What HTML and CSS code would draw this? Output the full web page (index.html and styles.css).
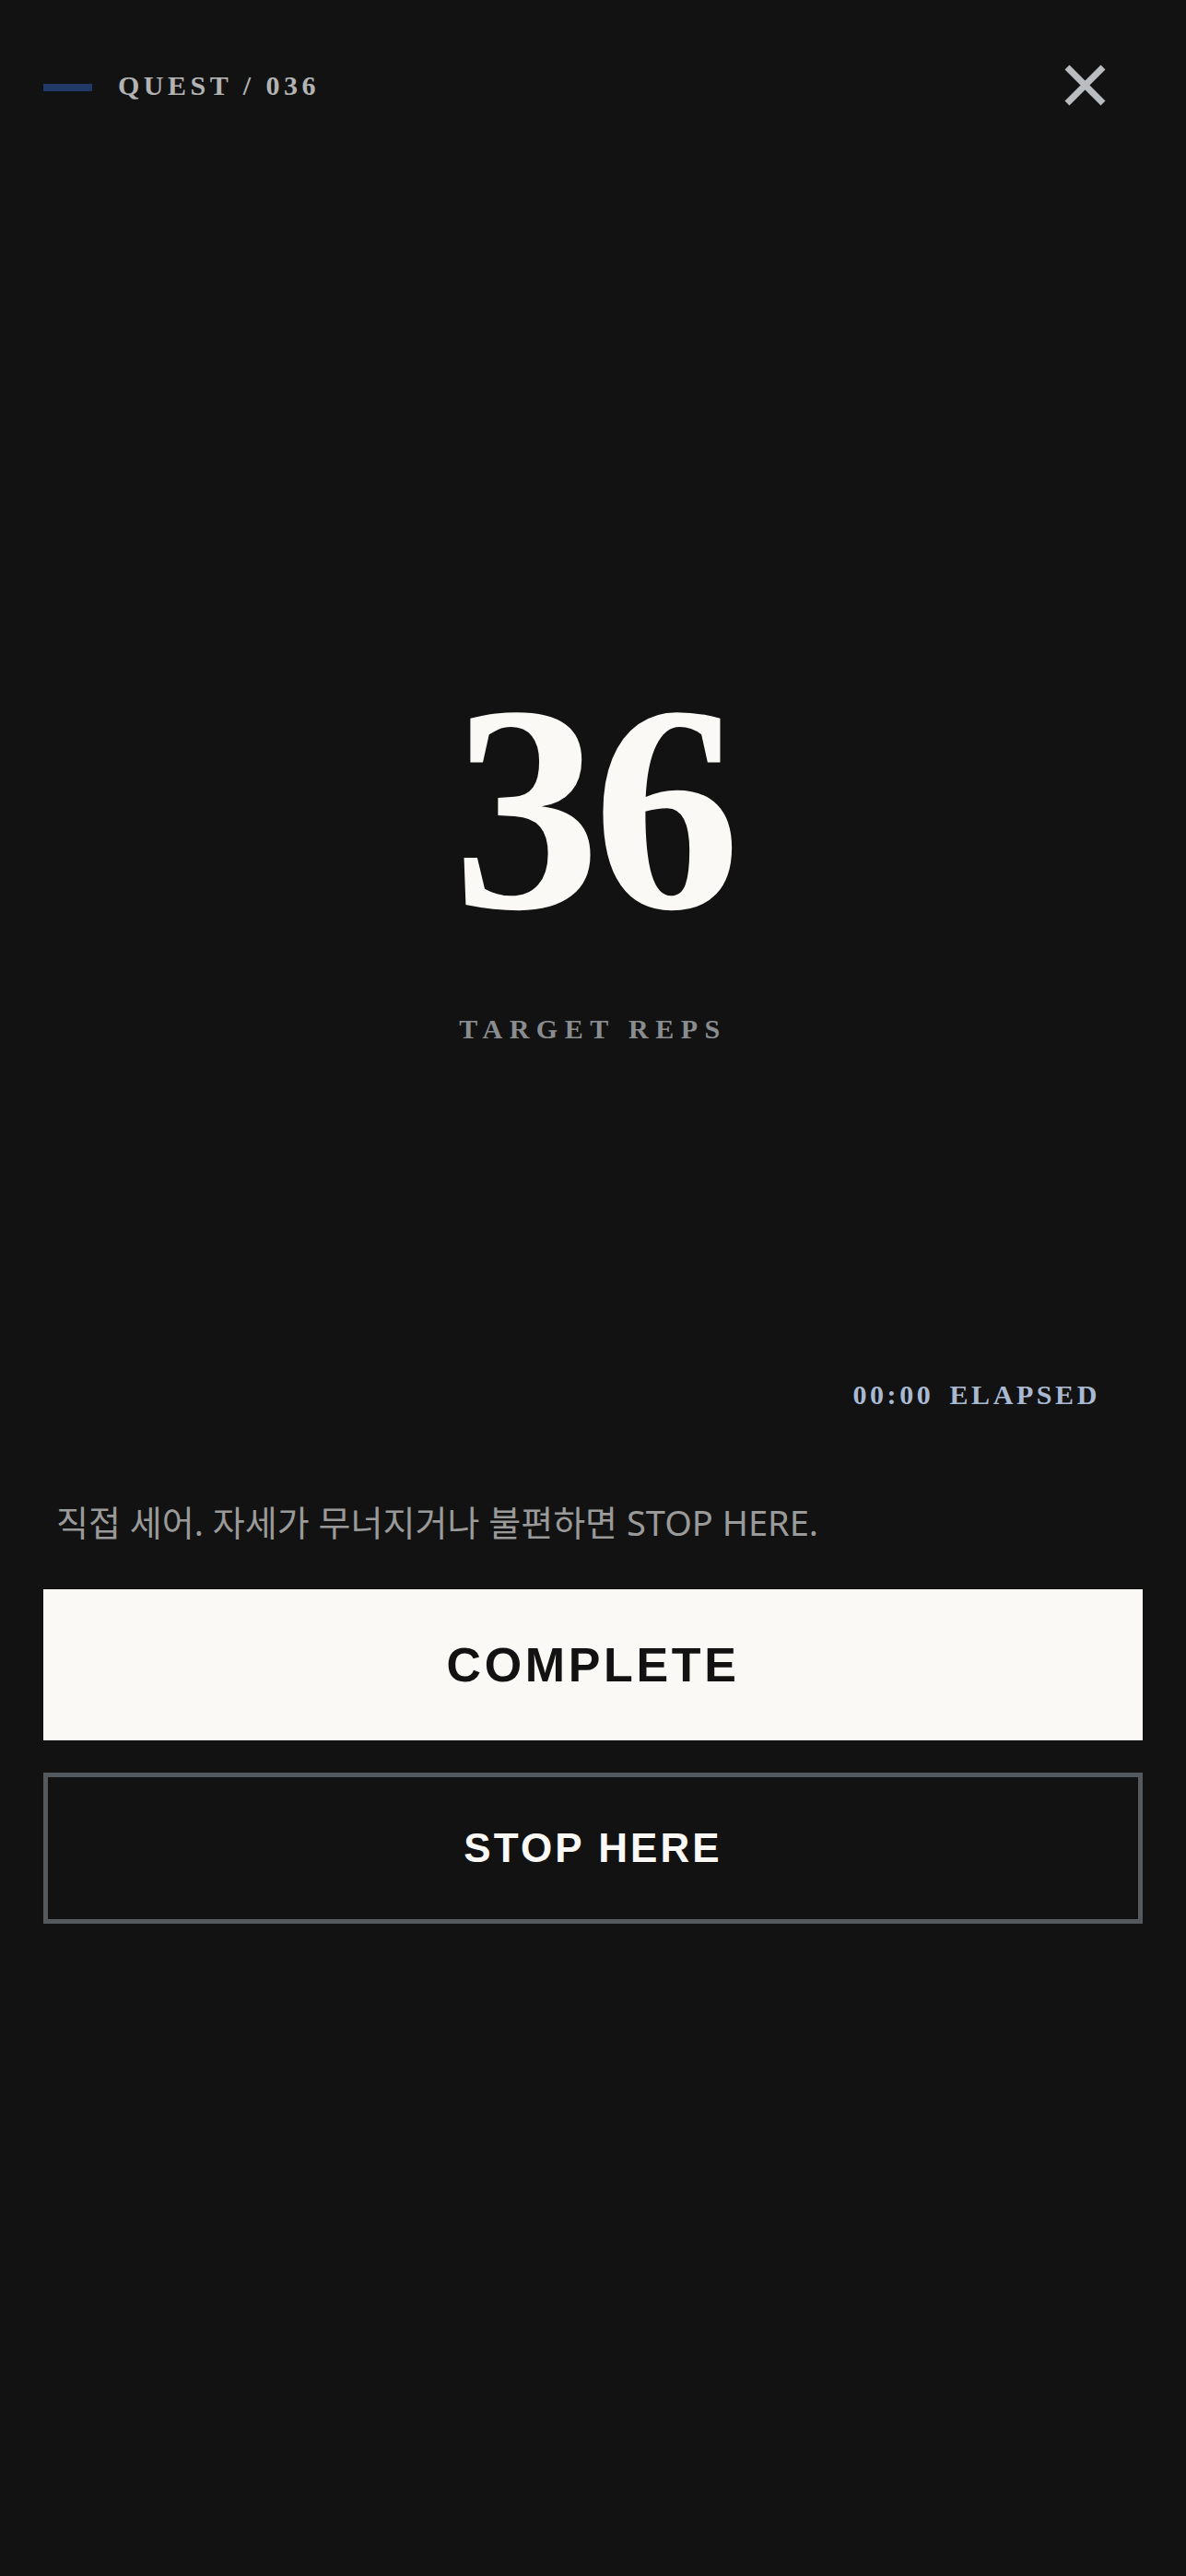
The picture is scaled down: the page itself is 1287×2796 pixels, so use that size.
FILE: index.html
```html
<!DOCTYPE html>
<html lang="ko">
<head>
<meta charset="utf-8">
<title>Quest 036</title>
<link rel="stylesheet" href="styles.css">
</head>
<body>
<main class="screen">
  <header class="topbar">
    <div class="quest">
      <span class="quest-mark"></span>
      <span class="quest-label">QUEST / 036</span>
    </div>
    <button class="close" aria-label="Close">
      <svg viewBox="0 0 45 45" width="45" height="45"><path d="M3 3 L42 42 M42 3 L3 42" stroke="#b9bdbf" stroke-width="7" fill="none"/></svg>
    </button>
  </header>
  <section class="target">
    <div class="target-count">36</div>
    <div class="target-label">TARGET REPS</div>
  </section>
  <div class="elapsed"><span class="elapsed-time">00:00</span><span class="elapsed-label">ELAPSED</span></div>
  <p class="note">직접 세어. 자세가 무너지거나 불편하면 STOP HERE.</p>
  <div class="actions">
    <button class="btn btn-complete">COMPLETE</button>
    <button class="btn btn-stop">STOP HERE</button>
  </div>
</main>
</body>
</html>
```
FILE: styles.css
```css
html, body {
  margin: 0;
  padding: 0;
  background: #121212;
}
body {
  min-height: 2796px;
  font-family: "Liberation Serif", serif;
}
.screen {
  padding: 0 47px;
  display: flex;
  flex-direction: column;
}
.topbar {
  display: flex;
  align-items: center;
  justify-content: space-between;
  padding-top: 70px;
  height: 45px;
}
.quest {
  display: flex;
  align-items: center;
  gap: 28px;
}
.quest-mark {
  width: 53px;
  height: 8px;
  background: #1f3a66;
  margin-top: 5px;
}
.quest-label {
  font: 700 30px/1 "Liberation Serif", serif;
  letter-spacing: 0.15em;
  color: #b3b3b3;
}
.close {
  width: 45px;
  height: 45px;
  padding: 0;
  margin-right: 40px;
  border: 0;
  background: none;
  display: block;
}
.close svg {
  display: block;
}
.target {
  display: flex;
  flex-direction: column;
  align-items: center;
  margin-top: 602px;
}
.target-count {
  font: 700 320px/1 "Liberation Serif", serif;
  letter-spacing: -0.025em;
  color: #faf9f5;
  height: 320px;
}
.target-label {
  margin-top: 65px;
  font: 700 30px/1 "Liberation Serif", serif;
  letter-spacing: 0.25em;
  color: #8a8d90;
}
.elapsed {
  display: flex;
  justify-content: flex-end;
  gap: 17px;
  margin-top: 367px;
  margin-right: 46px;
  font: 700 30px/1 "Liberation Serif", serif;
  letter-spacing: 0.12em;
  color: #a9b9d2;
}
.note {
  margin: 97px 0 0;
  padding-left: 14px;
  font: 400 38px/53px "Noto Sans", "Noto Sans CJK KR", sans-serif;
  color: #9a9a9a;
}
.actions {
  margin-top: 46px;
  display: flex;
  flex-direction: column;
  gap: 35px;
}
.btn {
  box-sizing: border-box;
  width: 100%;
  height: 164px;
  margin: 0;
  padding: 0;
  font-family: "Liberation Sans", sans-serif;
  font-weight: 700;
  letter-spacing: 0.07em;
  cursor: pointer;
}
.btn-complete {
  background: #faf9f5;
  color: #121212;
  border: 0;
  font-size: 52px;
}
.btn-stop {
  background: transparent;
  color: #faf9f5;
  border: 5px solid #54595d;
  font-size: 44px;
}
```
